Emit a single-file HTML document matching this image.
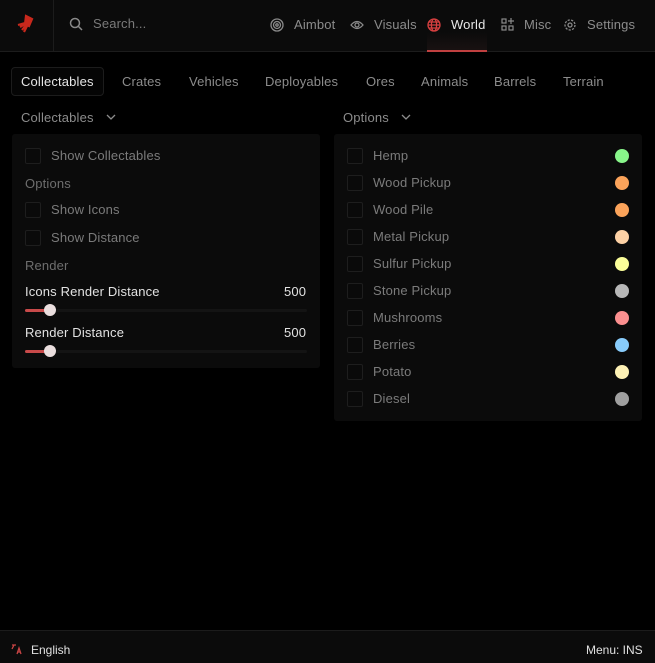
<!DOCTYPE html>
<html><head><style>
*{margin:0;padding:0;box-sizing:border-box}
body{width:655px;height:663px;background:#000;font-family:"Liberation Sans",sans-serif;font-size:13px;position:relative;overflow:hidden;letter-spacing:.15px}
.a{position:absolute;white-space:nowrap}
.hdr{position:absolute;left:0;top:0;width:655px;height:52px;background:#0b0b0b;border-bottom:1px solid #1c1c1c}
.nav{color:#8c8c8c;top:17px}
.tab{color:#8c8c8c;top:74px}
.panel{position:absolute;background:#0b0b0b;border-radius:3px}
.cb{position:absolute;width:16px;height:16px;border:1px solid #1e1e1e;border-radius:2px;background:#0a0a0a}
.lbl{color:#7b7b7b}
.sec{color:#6e6e6e}
.dot{position:absolute;width:14px;height:14px;border-radius:50%}
.track{position:absolute;height:3px;background:#141414;border-radius:2px}
</style></head><body>
<div class="hdr"></div>
<div class="a" style="left:53px;top:0;width:1px;height:52px;background:#1c1c1c"></div>
<svg class="a" style="left:14px;top:13px" width="22" height="22" viewBox="0 0 22 22"><path d="M12 3l6 3-3 7-4-2z M11 11l-5 3 M12 12l-4 5 M13 13l-3 6 M11 10l-7 2" stroke="#c8281c" stroke-width="2.2" fill="#c8281c"/></svg>
<svg class="a" style="left:69px;top:17px" width="14" height="14" viewBox="0 0 14 14"><circle cx="6" cy="6" r="4.5" stroke="#8a8a8a" stroke-width="1.5" fill="none"/><path d="M9.5 9.5l3.5 3.5" stroke="#8a8a8a" stroke-width="1.5"/></svg>
<div class="a" style="left:93px;top:16px;color:#7a7a7a">Search...</div>
<svg class="a" style="left:270px;top:18px" width="14" height="14" viewBox="0 0 14 14" fill="none" stroke="#8a8a8a" stroke-width="1.3"><circle cx="7" cy="7" r="6"/><circle cx="7" cy="7" r="3.5"/><circle cx="7" cy="7" r="1.2"/></svg>
<div class="a nav" style="left:294px">Aimbot</div>
<svg class="a" style="left:350px;top:19px" width="14" height="12" viewBox="0 0 14 12" fill="none" stroke="#8a8a8a" stroke-width="1.3"><path d="M1 6q6-7 12 0q-6 7-12 0z"/><circle cx="7" cy="6" r="2"/></svg>
<div class="a nav" style="left:374px">Visuals</div>
<div class="a" style="left:427px;top:32px;width:60px;height:20px;background:linear-gradient(#0b0b0b,#1a1212)"></div>
<div class="a" style="left:427px;top:50px;width:60px;height:2px;background:#c04040"></div>
<svg class="a" style="left:427px;top:18px" width="14" height="14" viewBox="0 0 14 14" fill="none" stroke="#d84040" stroke-width="1.3"><circle cx="7" cy="7" r="6"/><ellipse cx="7" cy="7" rx="2.6" ry="6"/><path d="M1 7h12M2 4h10M2 10h10"/></svg>
<div class="a nav" style="left:451px;color:#e8e8e8">World</div>
<svg class="a" style="left:501px;top:18px" width="13" height="13" viewBox="0 0 13 13" fill="none" stroke="#8a8a8a" stroke-width="1.2"><rect x="1" y="1" width="4" height="4"/><rect x="1" y="8" width="4" height="4"/><rect x="8" y="8" width="4" height="4"/><path d="M10 0v6M7 3h6"/></svg>
<div class="a nav" style="left:524px">Misc</div>
<svg class="a" style="left:563px;top:18px" width="14" height="14" viewBox="0 0 14 14" fill="none" stroke="#8a8a8a" stroke-width="1.3"><circle cx="7" cy="7" r="2"/><circle cx="7" cy="7" r="5" stroke-dasharray="2.2 1.3"/></svg>
<div class="a nav" style="left:587px">Settings</div>

<div class="a" style="left:11px;top:67px;width:93px;height:29px;border:1px solid #1c1c1c;border-radius:4px;background:#050505"></div>
<div class="a tab" style="left:21px;color:#e6e6e6">Collectables</div>
<div class="a tab" style="left:122px">Crates</div>
<div class="a tab" style="left:189px">Vehicles</div>
<div class="a tab" style="left:265px">Deployables</div>
<div class="a tab" style="left:366px">Ores</div>
<div class="a tab" style="left:421px">Animals</div>
<div class="a tab" style="left:494px">Barrels</div>
<div class="a tab" style="left:563px">Terrain</div>

<div class="a" style="left:21px;top:110px;color:#8c8c8c">Collectables</div>
<svg class="a" style="left:106px;top:114px" width="10" height="7"><path d="M1 1l4 4 4-4" stroke="#8c8c8c" stroke-width="1.3" fill="none"/></svg>
<div class="a" style="left:343px;top:110px;color:#8c8c8c">Options</div>
<svg class="a" style="left:401px;top:114px" width="10" height="7"><path d="M1 1l4 4 4-4" stroke="#8c8c8c" stroke-width="1.3" fill="none"/></svg>

<div class="panel" style="left:12px;top:134px;width:308px;height:234px"></div>
<div class="cb" style="left:25px;top:148px"></div><div class="a lbl" style="left:51px;top:148px">Show Collectables</div>
<div class="a sec" style="left:25px;top:176px">Options</div>
<div class="cb" style="left:25px;top:202px"></div><div class="a lbl" style="left:51px;top:202px">Show Icons</div>
<div class="cb" style="left:25px;top:230px"></div><div class="a lbl" style="left:51px;top:230px">Show Distance</div>
<div class="a sec" style="left:25px;top:258px">Render</div>
<div class="a" style="left:25px;top:284px;color:#e2e2e2">Icons Render Distance</div>
<div class="a" style="left:284px;top:284px;color:#e2e2e2">500</div>
<div class="track" style="left:25px;top:309px;width:282px"></div>
<div class="track" style="left:25px;top:309px;width:25px;background:#c84a4a"></div>
<div class="dot" style="left:44px;top:304px;width:12px;height:12px;background:#eadede"></div>
<div class="a" style="left:25px;top:325px;color:#e2e2e2">Render Distance</div>
<div class="a" style="left:284px;top:325px;color:#e2e2e2">500</div>
<div class="track" style="left:25px;top:350px;width:282px"></div>
<div class="track" style="left:25px;top:350px;width:25px;background:#c84a4a"></div>
<div class="dot" style="left:44px;top:345px;width:12px;height:12px;background:#eadede"></div>

<div class="panel" style="left:334px;top:134px;width:308px;height:287px"></div>
<div class="cb" style="left:347px;top:148px"></div><div class="a lbl" style="left:373px;top:148px">Hemp</div><div class="dot" style="left:615px;top:149px;background:#88f58a"></div>
<div class="cb" style="left:347px;top:175px"></div><div class="a lbl" style="left:373px;top:175px">Wood Pickup</div><div class="dot" style="left:615px;top:176px;background:#fba35a"></div>
<div class="cb" style="left:347px;top:202px"></div><div class="a lbl" style="left:373px;top:202px">Wood Pile</div><div class="dot" style="left:615px;top:203px;background:#fba35a"></div>
<div class="cb" style="left:347px;top:229px"></div><div class="a lbl" style="left:373px;top:229px">Metal Pickup</div><div class="dot" style="left:615px;top:230px;background:#fdd1a5"></div>
<div class="cb" style="left:347px;top:256px"></div><div class="a lbl" style="left:373px;top:256px">Sulfur Pickup</div><div class="dot" style="left:615px;top:257px;background:#fafd99"></div>
<div class="cb" style="left:347px;top:283px"></div><div class="a lbl" style="left:373px;top:283px">Stone Pickup</div><div class="dot" style="left:615px;top:284px;background:#b8b8b8"></div>
<div class="cb" style="left:347px;top:310px"></div><div class="a lbl" style="left:373px;top:310px">Mushrooms</div><div class="dot" style="left:615px;top:311px;background:#fb8f8f"></div>
<div class="cb" style="left:347px;top:337px"></div><div class="a lbl" style="left:373px;top:337px">Berries</div><div class="dot" style="left:615px;top:338px;background:#88ccfb"></div>
<div class="cb" style="left:347px;top:364px"></div><div class="a lbl" style="left:373px;top:364px">Potato</div><div class="dot" style="left:615px;top:365px;background:#fdf1b5"></div>
<div class="cb" style="left:347px;top:391px"></div><div class="a lbl" style="left:373px;top:391px">Diesel</div><div class="dot" style="left:615px;top:392px;background:#a0a0a0"></div>

<div class="a" style="left:0;top:630px;width:655px;height:33px;background:#0b0b0b;border-top:1px solid #1c1c1c"></div>
<svg class="a" style="left:11px;top:644px" width="11" height="11" viewBox="0 0 11 11"><path d="M1 1h4M3 1l-2 4M6 10l2-6 2 6M7 8h2" stroke="#c84444" stroke-width="1.3" fill="none"/></svg>
<div class="a" style="left:31px;top:643px;color:#e0e0e0;font-size:12px;letter-spacing:0">English</div>
<div class="a" style="left:586px;top:643px;color:#e0e0e0;font-size:12px;letter-spacing:0">Menu: INS</div>
</body></html>
